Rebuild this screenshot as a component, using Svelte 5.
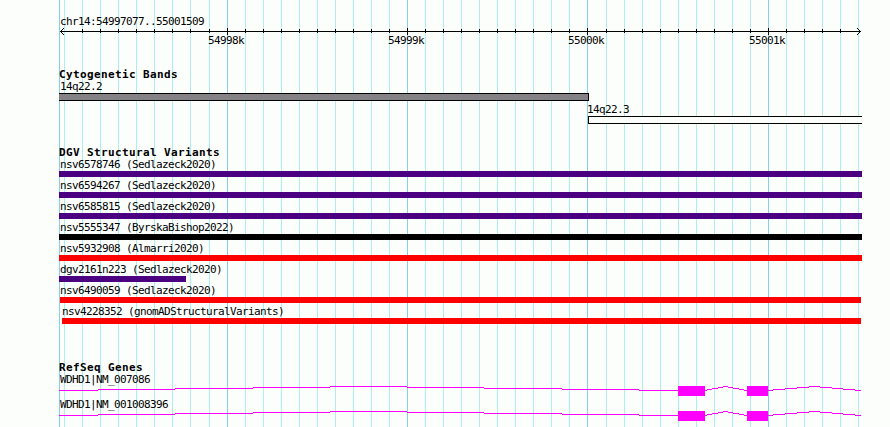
<script>
  const grid = [64, 82, 100, 118, 136, 154, 172, 190, 209, 245, 263, 281, 299, 317, 335, 353, 371, 389, 425, 443, 461, 479, 497, 515, 533, 551, 569, 606, 624, 642, 660, 678, 696, 714, 732, 750, 786, 804, 822, 840, 858];
  const major = [
    { x: 227, label: '54998k' },
    { x: 407, label: '54999k' },
    { x: 587, label: '55000k' },
    { x: 768, label: '55001k' }
  ];
  const variants = [
    { name: 'nsv6578746 (Sedlazeck2020)', start: 59, end: 862, color: '#4b0082' },
    { name: 'nsv6594267 (Sedlazeck2020)', start: 59, end: 862, color: '#4b0082' },
    { name: 'nsv6585815 (Sedlazeck2020)', start: 59, end: 862, color: '#4b0082' },
    { name: 'nsv5555347 (ByrskaBishop2022)', start: 59, end: 862, color: '#000' },
    { name: 'nsv5932908 (Almarri2020)', start: 59, end: 862, color: '#f00' },
    { name: 'dgv2161n223 (Sedlazeck2020)', start: 59, end: 186, color: '#4b0082' },
    { name: 'nsv6490059 (Sedlazeck2020)', start: 60, end: 861, color: '#f00' },
    { name: 'nsv4228352 (gnomADStructuralVariants)', start: 62, end: 861, color: '#f00' }
  ];
  const genes = ['WDHD1|NM_007086', 'WDHD1|NM_001008396'];
  const exons = [[678, 27], [747, 21]];
  // Each intron rises one pixel per step to its middle and falls again.
  const introns = [
    [59, 98, 175, 253, 330, 407, 484, 562, 639, 678],
    [705, 707, 712, 718, 723, 728, 733, 739, 744, 747],
    [768, 773, 785, 797, 809, 820, 832, 843, 855, 861]
  ];
  const steps = introns.flatMap((xs) =>
    xs.slice(0, -1).map((x, i) => ({ x, w: xs[i + 1] - x, y: 4 - Math.min(i, 8 - i) }))
  );
</script>

<main>
  <svg class="grid" width="890" height="427" shape-rendering="crispEdges" aria-hidden="true">
    {#each grid as x}<rect {x} y="0" width="1" height="427" fill="#afeeee" />{/each}
    <rect x="59" y="0" width="1" height="427" fill="#87ceeb" />
    {#each major as m}<rect x={m.x} y="0" width="1" height="427" fill="#87ceeb" />{/each}
  </svg>

  <header>
    <div class="label range">chr14:54997077..55001509</div>
    <svg class="ruler" width="890" height="22" shape-rendering="crispEdges">
      <rect x="60" y="4" width="801" height="1" />
      {#each grid.slice(1, -1) as x}<rect {x} y="2" width="1" height="4" />{/each}
      {#each major as m}
        <rect x={m.x} y="1" width="1" height="7" />
        <text x={m.x - 19} y="17">{m.label}</text>
      {/each}
      <path d="M61 3h1v1h-1zM62 2h1v1h-1zM63 1h1v1h-1zM61 5h1v1h-1zM62 6h1v1h-1zM63 7h1v1h-1z" />
      <path d="M859 3h1v1h-1zM858 2h1v1h-1zM857 1h1v1h-1zM859 5h1v1h-1zM858 6h1v1h-1zM857 7h1v1h-1z" />
    </svg>
  </header>

  <section class="bands">
    <h2>Cytogenetic Bands</h2>
    <div class="label">14q22.2</div>
    <div class="band first"></div>
    <div class="label second-label">14q22.3</div>
    <div class="band second"></div>
  </section>

  <section class="variants">
    <h2>DGV Structural Variants</h2>
    {#each variants as v}
      <div class="variant" style="margin-left: {v.start}px">
        <div class="label" class:flush={v.start > 59}>{v.name}</div>
        <div class="bar" style="width: {v.end - v.start}px; background: {v.color}"></div>
      </div>
    {/each}
  </section>

  <section class="genes">
    <h2>RefSeq Genes</h2>
    {#each genes as gene}
      <div class="gene">
        <div class="label">{gene}</div>
        <svg width="890" height="10" shape-rendering="crispEdges">
          {#each steps as s}<rect x={s.x} y={s.y} width={s.w} height="1" />{/each}
          {#each exons as [x, w]}<rect {x} y="0" width={w} height="10" />{/each}
        </svg>
      </div>
    {/each}
  </section>
</main>

<style>
  :global(body) { margin: 0; }
  main {
    position: relative;
    width: 890px;
    height: 427px;
    overflow: hidden;
    background: #fcfefc;
    color: #000;
    font-family: "DejaVu Sans Mono", monospace;
    display: flow-root;
  }
  svg { display: block; }
  .grid { position: absolute; inset: 0; }
  header, section { position: relative; }
  header { padding-top: 15px; height: 53px; }
  .label {
    height: 12px;
    font-size: 11px;
    line-height: 13px;
    letter-spacing: -0.622px;
    white-space: pre;
    padding-left: 1px;
  }
  .range, .bands .label, .genes .label { padding-left: 60px; }
  .ruler text { font-size: 11px; letter-spacing: -0.622px; }
  h2 {
    margin: 0;
    padding-left: 59px;
    height: 12px;
    font-size: 11px;
    line-height: 13px;
    letter-spacing: 0.378px;
    font-weight: bold;
    white-space: pre;
  }
  .bands { height: 78px; }
  .band { box-sizing: border-box; height: 8px; border: 1px solid #000; }
  .band.first { margin: 1px 0 0 59px; width: 530px; border-left: 0; background: #848284; }
  .band.second { margin: 1px 0 0 588px; width: 274px; border-right: 0; background: #fcfefc; }
  .bands .second-label { margin-top: 2px; padding-left: 587px; }
  .variants { height: 215px; }
  .variant { height: 21px; }
  .bar { height: 6px; margin-top: 1px; }
  .label.flush { padding-left: 0; }
  .gene { height: 25px; }
  .gene svg { margin-top: 1px; fill: #f0f; }
</style>
